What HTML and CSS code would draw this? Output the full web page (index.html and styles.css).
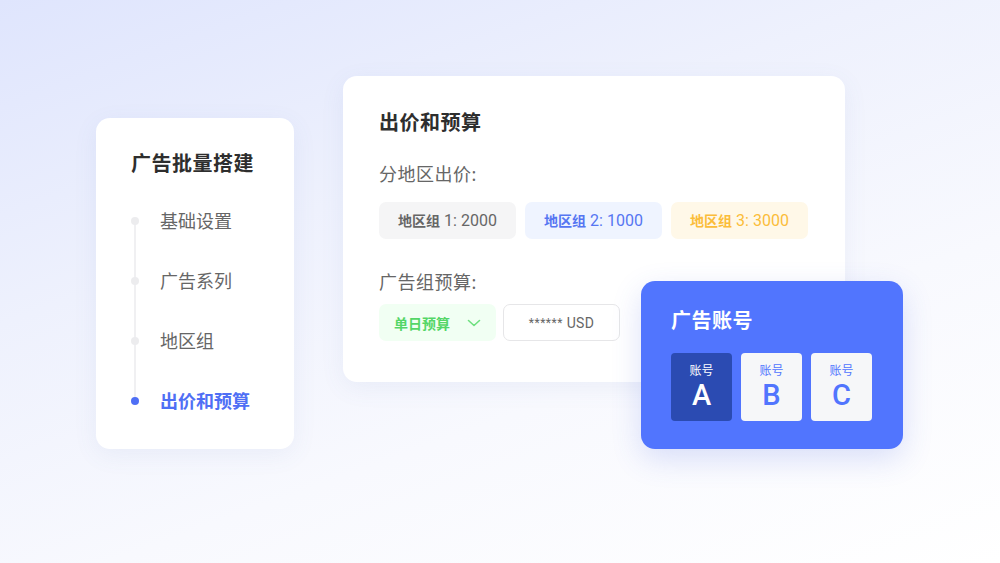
FILE: index.html
```html
<!DOCTYPE html>
<html lang="zh">
<head>
<meta charset="utf-8">
<link rel="stylesheet" href="styles.css">
</head>
<body>
<div class="stage">
  <div class="card steps-card">
    <h2 class="steps-title">广告批量搭建</h2>
    <ul class="steps">
      <li class="step"><span class="dot"></span>基础设置</li>
      <li class="step"><span class="dot"></span>广告系列</li>
      <li class="step"><span class="dot"></span>地区组</li>
      <li class="step active"><span class="dot"></span>出价和预算</li>
    </ul>
  </div>

  <div class="card bid-card">
    <h2 class="bid-title">出价和预算</h2>
    <div class="label">分地区出价:</div>
    <div class="chips">
      <div class="chip chip-gray"><span class="chip-text"><b>地区组</b> 1: 2000</span></div>
      <div class="chip chip-blue"><span class="chip-text"><b>地区组</b> 2: 1000</span></div>
      <div class="chip chip-yellow"><span class="chip-text"><b>地区组</b> 3: 3000</span></div>
    </div>
    <div class="label label-2">广告组预算:</div>
    <div class="chips chips-2">
      <div class="chip chip-green"><b>单日预算</b>
        <svg class="chev" width="14" height="10" viewBox="0 0 14 10"><path d="M1.5 2.5 L7 7.5 L12.5 2.5" fill="none" stroke="#6ee07f" stroke-width="1.6" stroke-linecap="round" stroke-linejoin="round"/></svg>
      </div>
      <div class="chip chip-input"><span class="stars">******</span>&nbsp;USD</div>
    </div>
  </div>

  <div class="card account-card">
    <h2 class="account-title">广告账号</h2>
    <div class="tiles">
      <div class="tile tile-on"><span class="tile-label">账号</span><span class="tile-letter">A</span></div>
      <div class="tile"><span class="tile-label">账号</span><span class="tile-letter">B</span></div>
      <div class="tile"><span class="tile-label">账号</span><span class="tile-letter">C</span></div>
    </div>
  </div>
</div>
</body>
</html>
```
FILE: styles.css
```css
* { box-sizing: border-box; margin: 0; padding: 0; }
html, body { width: 1000px; height: 563px; overflow: hidden; }
body {
  font-family: "Noto Sans", "Noto Sans CJK SC", sans-serif;
  background: linear-gradient(160deg, #dfe5fd 0%, #eef1fd 35%, #f8f9fe 65%, #ffffff 100%);
}
.stage { position: relative; width: 1000px; height: 563px; }
.card {
  position: absolute;
  background: #fff;
  border-radius: 14px;
  box-shadow: 0 6px 24px rgba(90, 110, 180, 0.08);
}
.steps-card { left: 96px; top: 118px; width: 198px; height: 331px; padding: 32px 0 0 35px; }
.steps-title { font-size: 20px; font-weight: 700; color: #2e2e2e; line-height: 28px; letter-spacing: 0.5px; }
.steps { list-style: none; margin-top: 31px; position: relative; }
.steps::before {
  content: ""; position: absolute; left: 3px; top: 12px; width: 2px; height: 180px; background: #f0f0f2;
}
.step {
  display: flex; align-items: center; height: 24px;
  font-size: 18px; color: #666; line-height: 24px; position: relative;
}
.step + .step { height: 60px; padding-top: 36px; }
.dot { width: 8px; height: 8px; border-radius: 50%; background: #ececee; margin-right: 21px; position: relative; }
.step.active { color: #4f6ff5; font-weight: 700; }
.step.active .dot { background: #4f6ff5; }

.bid-card { left: 343px; top: 76px; width: 502px; height: 306px; padding: 32px 0 0 36px; z-index: 1; }
.bid-title { font-size: 20px; font-weight: 700; color: #2e2e2e; line-height: 30px; letter-spacing: 0.5px; }
.label { font-size: 18px; color: #666; line-height: 24px; margin-top: 24px; letter-spacing: 0.5px; }
.label-2 { margin-top: 31px; }
.chips { display: flex; gap: 9px; margin-top: 16px; }
.chips-2 { margin-top: 10px; }
.chip {
  height: 37px; width: 137px; border-radius: 7px;
  display: flex; align-items: center; justify-content: center;
  font-family: Roboto, "Noto Sans CJK SC", sans-serif;
  font-size: 16px; font-weight: 400;
}
.chip-text { line-height: 20px; }
.chip b { font-weight: 700; font-size: 14px; font-family: "Noto Sans CJK SC", sans-serif; }
.chip-gray { background: #f5f5f6; color: #666; }
.chip-blue { background: #eff4ff; color: #5676f2; }
.chip-yellow { background: #fff8e8; color: #fbbd3a; }
.chip-green { width: 117px; background: #f1fff3; color: #54d667; gap: 0; }
.chip-green b { margin-right: 17px; }
.chev { display: block; margin-top: 1px; }
.chip-input { width: 117px; margin-left: -2px; background: #fff; border: 1px solid #e6e6e8; color: #666; font-size: 14px; letter-spacing: 0.3px; }
.stars { font-size: 12px; letter-spacing: 0.5px; }

.account-card {
  left: 641px; top: 281px; width: 262px; height: 168px; background: #5175fe; z-index: 2;
  padding: 26px 0 0 30px;
  box-shadow: 0 10px 30px rgba(60, 90, 220, 0.18);
}
.account-title { font-size: 20px; font-weight: 700; color: #fff; line-height: 28px; letter-spacing: 0.5px; }
.tiles { display: flex; gap: 9px; margin-top: 18px; }
.tile {
  width: 61px; height: 68px; border-radius: 4px; background: #f6f7f9;
  display: flex; flex-direction: column; align-items: center; padding-top: 11px;
  color: #5175fe;
}
.tile-on { background: #2b4bb2; color: #fff; }
.tile-label { font-size: 12px; line-height: 14px; }
.tile-letter { font-size: 29px; line-height: 34px; font-weight: 500; font-family: Roboto, "Noto Sans", sans-serif; }
```
